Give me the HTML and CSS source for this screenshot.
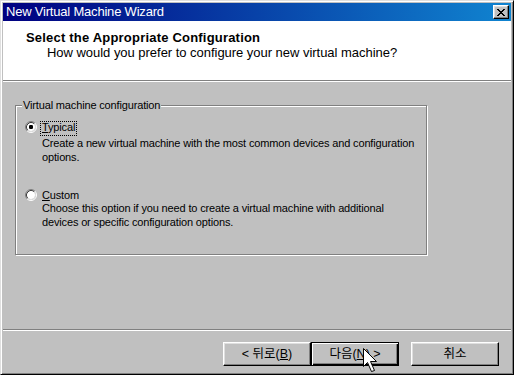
FILE: index.html
```html
<!DOCTYPE html>
<html>
<head>
<meta charset="utf-8">
<title>New Virtual Machine Wizard</title>
<link rel="stylesheet" href="styles.css">
</head>
<body>
<div class="window">
  <div class="titlebar">
    <span class="title">New Virtual Machine Wizard</span>
    <span class="close">
      <svg width="8" height="7" viewBox="0 0 8 7"><path fill="#000" d="M0 0h2v1H0z M6 0h2v1H6z M1 1h2v1H1z M5 1h2v1H5z M2 2h4v1H2z M3 3h2v1H3z M2 4h4v1H2z M1 5h2v1H1z M5 5h2v1H5z M0 6h2v1H0z M6 6h2v1H6z"/></svg>
    </span>
  </div>
  <div class="header">
    <div class="header-title">Select the Appropriate Configuration</div>
    <div class="header-sub">How would you prefer to configure your new virtual machine?</div>
  </div>
  <div class="content">
    <div class="group">
      <span class="legend">Virtual machine configuration</span>
      <div class="option">
        <svg class="radio" width="12" height="12" viewBox="0 0 12 12">
          <circle cx="6" cy="6" r="4" fill="#fff"/>
          <path d="M2.11 9.89A5.5 5.5 0 0 1 9.89 2.11" fill="none" stroke="#808080"/>
          <path d="M9.89 2.11A5.5 5.5 0 0 1 2.11 9.89" fill="none" stroke="#fff"/>
          <path d="M2.82 9.18A4.5 4.5 0 0 1 9.18 2.82" fill="none" stroke="#404040"/>
          <path d="M9.18 2.82A4.5 4.5 0 0 1 2.82 9.18" fill="none" stroke="#dfdfdf"/>
          <rect x="4" y="4" width="4" height="4" rx="1.2" fill="#000"/>
        </svg>
        <span class="label focus"><u>T</u>ypical</span>
        <div class="desc">Create a new virtual machine with the most common devices and configuration options.</div>
      </div>
      <div class="option option-second">
        <svg class="radio" width="12" height="12" viewBox="0 0 12 12">
          <circle cx="6" cy="6" r="4" fill="#fff"/>
          <path d="M2.11 9.89A5.5 5.5 0 0 1 9.89 2.11" fill="none" stroke="#808080"/>
          <path d="M9.89 2.11A5.5 5.5 0 0 1 2.11 9.89" fill="none" stroke="#fff"/>
          <path d="M2.82 9.18A4.5 4.5 0 0 1 9.18 2.82" fill="none" stroke="#404040"/>
          <path d="M9.18 2.82A4.5 4.5 0 0 1 2.82 9.18" fill="none" stroke="#dfdfdf"/>
        </svg>
        <span class="label"><u>C</u>ustom</span>
        <div class="desc desc-tight">Choose this option if you need to create a virtual machine with additional devices or specific configuration options.</div>
      </div>
    </div>
  </div>
  <div class="footer">
    <button class="btn">&lt; 뒤로(<u>B</u>)</button>
    <button class="btn btn-default">다음(<u>N</u>) &gt;</button>
    <button class="btn">취소</button>
  </div>
  <svg class="cursor" width="15" height="25" viewBox="0 0 15 25">
    <path d="M0.5 0.5V18.5L4.5 14.5L8.5 23.5L11.5 22.5L7.5 13.5H13.5Z" fill="#fff" stroke="#000"/>
  </svg>
</div>
</body>
</html>
```
FILE: styles.css
```css
html, body {
  margin: 0;
  padding: 0;
  background: #c0c0c0;
}

.window {
  position: relative;
  width: 514px;
  height: 375px;
  box-sizing: border-box;
  border: 1px solid;
  border-color: #dfdfdf #000 #000 #dfdfdf;
  box-shadow: inset 1px 1px #fff, inset -1px -1px #808080;
  padding: 2px;
  background: #c0c0c0;
  display: flex;
  flex-direction: column;
  font-family: "Liberation Sans", Arial, "Noto Sans CJK KR", sans-serif;
  color: #000;
  overflow: hidden;
}

.titlebar {
  height: 18px;
  flex: none;
  display: flex;
  align-items: center;
  justify-content: space-between;
  padding: 0 2px 0 3px;
  background: linear-gradient(to right, #000080, #1084d0);
}

.title {
  color: #fff;
  font-size: 13px;
  letter-spacing: -0.2px;
  line-height: 18px;
  white-space: nowrap;
}

.close {
  width: 16px;
  height: 14px;
  box-sizing: border-box;
  display: flex;
  align-items: center;
  justify-content: center;
  background: #c0c0c0;
  border: 1px solid;
  border-color: #fff #000 #000 #fff;
  box-shadow: inset -1px -1px #808080, inset 1px 1px #dfdfdf;
}

.close svg {
  display: block;
}

.header {
  flex: none;
  height: 50px;
  background: #fff;
  border-bottom: 1px solid #808080;
  box-shadow: 0 1px #fff;
  margin-bottom: 1px;
  padding-top: 9px;
}

.header-title {
  font-weight: bold;
  font-size: 13px;
  letter-spacing: 0.2px;
  line-height: 15px;
  padding-left: 23px;
}

.header-sub {
  font-size: 13px;
  line-height: 15px;
  padding-left: 44px;
  letter-spacing: -0.03px;
}

.content {
  flex: 1;
  padding: 23px 0 0 12px;
}

.group {
  position: relative;
  width: 412px;
  height: 150px;
  box-sizing: border-box;
  border: 1px solid #808080;
  box-shadow: inset 1px 1px #fff, 1px 1px #fff;
  padding: 15px 8px 0 9px;
  font-size: 11px;
  letter-spacing: -0.15px;
}

.legend {
  position: absolute;
  top: -7px;
  left: 6px;
  padding: 0 1px;
  background: #c0c0c0;
  line-height: 13px;
  white-space: nowrap;
}

.option {
  display: grid;
  grid-template-columns: 12px 1fr;
  column-gap: 5px;
  align-items: start;
}

.option-second {
  margin-top: 25px;
}

.radio {
  display: block;
  grid-row: 1;
  grid-column: 1;
}

.label {
  grid-row: 1;
  grid-column: 2;
  justify-self: start;
  line-height: 11px;
  padding: 0 1px 2px 1px;
  margin-left: -2px;
  border: 1px dotted transparent;
}

.label.focus {
  border-color: #000;
}

.desc {
  grid-row: 2;
  grid-column: 2;
  line-height: 14px;
  max-width: 376px;
}

.desc-tight {
  margin-top: -3px;
}

.footer {
  flex: none;
  display: flex;
  justify-content: flex-end;
  border-top: 1px solid #808080;
  box-shadow: inset 0 1px #fff;
  padding: 12px 12px 6px 0;
}

.btn {
  width: 88px;
  height: 24px;
  box-sizing: border-box;
  margin: 0;
  padding: 0;
  background: #c0c0c0;
  font-family: "Liberation Sans", Arial, "Noto Sans CJK KR", sans-serif;
  font-size: 12.5px;
  color: #000;
  border: 1px solid;
  border-color: #fff #000 #000 #fff;
  box-shadow: inset -1px -1px #808080, inset 1px 1px #dfdfdf;
  line-height: 20px;
}

.btn-default {
  border-color: #000;
  box-shadow: inset 1px 1px #fff, inset -1px -1px #000, inset -2px -2px #808080;
  margin-right: 12px;
}

.cursor {
  position: absolute;
  left: 362px;
  top: 347px;
}
```
